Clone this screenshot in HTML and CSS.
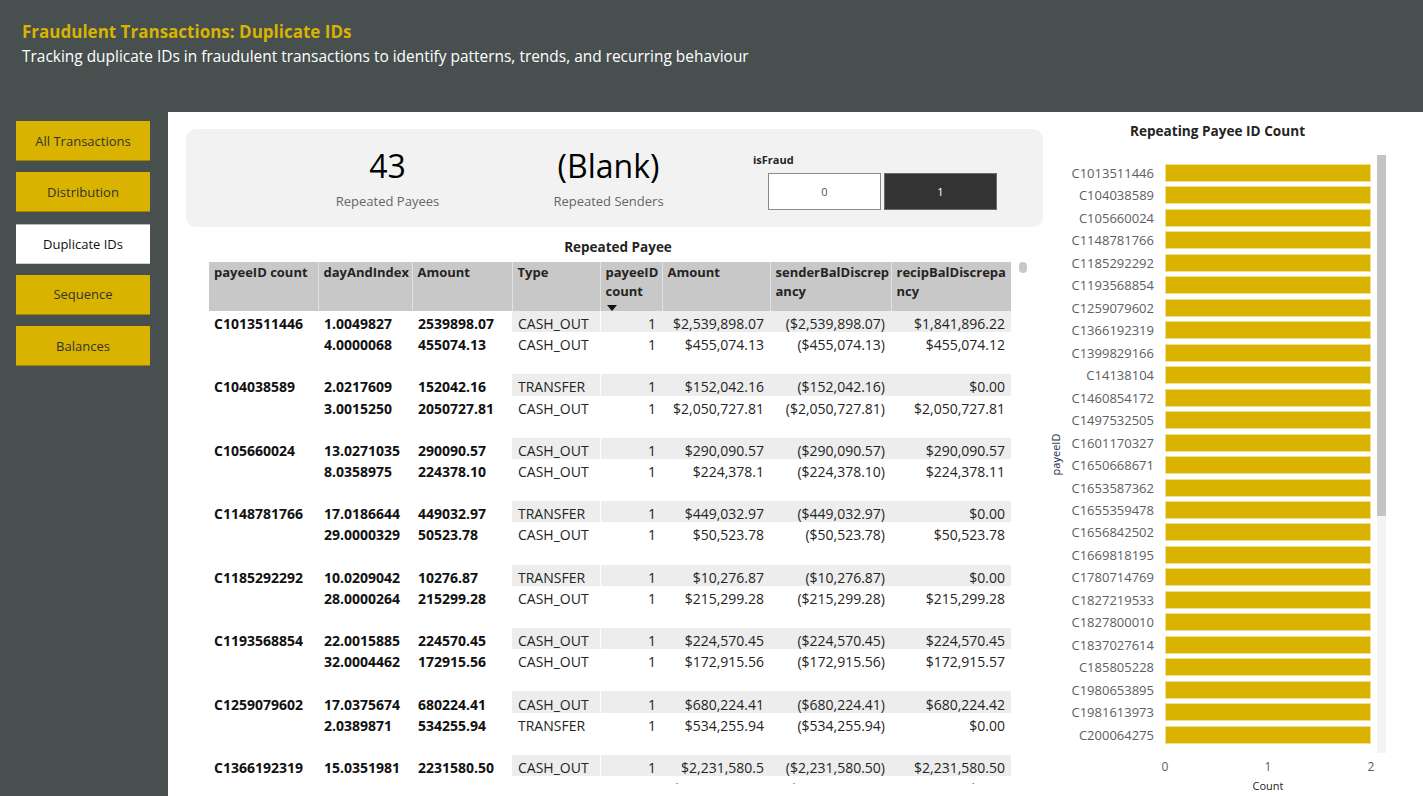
FILE: index.html
```html
<!DOCTYPE html>
<html lang="en">
<head>
<meta charset="utf-8">
<title>Fraudulent Transactions: Duplicate IDs</title>
<link rel="stylesheet" href="styles.css">
</head>
<body>
<header class="top">
  <h1 class="title">Fraudulent Transactions: Duplicate IDs</h1>
  <p class="subtitle">Tracking duplicate IDs in fraudulent transactions to identify patterns, trends, and recurring behaviour</p>
</header>
<div class="layout">
  <nav class="side">
    <div class="nav-btn">All Transactions</div>
    <div class="nav-btn">Distribution</div>
    <div class="nav-btn active">Duplicate IDs</div>
    <div class="nav-btn">Sequence</div>
    <div class="nav-btn">Balances</div>
  </nav>
  <main class="canvas">
    <section class="left">
      <div class="kpi-card">
        <div class="kpi">
          <div class="kpi-value">43</div>
          <div class="kpi-label">Repeated Payees</div>
        </div>
        <div class="kpi">
          <div class="kpi-value">(Blank)</div>
          <div class="kpi-label">Repeated Senders</div>
        </div>
        <div class="slicer">
          <div class="slicer-title">isFraud</div>
          <div class="slicer-btns">
            <div class="sbtn">0</div>
            <div class="sbtn sel">1</div>
          </div>
        </div>
      </div>

      <div class="table-visual">
        <div class="tv-title">Repeated Payee</div>
        <div class="tv-body">
          <div class="tv-clip">
            <table class="matrix">
              <colgroup>
                <col class="c1"><col class="c2"><col class="c3"><col class="c4"><col class="c5"><col class="c6"><col class="c7"><col class="c8">
              </colgroup>
              <thead>
                <tr>
                  <th>payeeID count</th>
                  <th>dayAndIndex</th>
                  <th>Amount</th>
                  <th>Type</th>
                  <th>payeeID<br>count<span class="sort"></span></th>
                  <th>Amount</th>
                  <th>senderBalDiscrep<br>ancy</th>
                  <th>recipBalDiscrepa<br>ncy</th>
                </tr>
              </thead>
              <tbody>
                <tr class="r1"><td class="id">C1013511446</td><td class="b">1.0049827</td><td class="b">2539898.07</td><td class="type">CASH_OUT</td><td class="num">1</td><td class="num">$2,539,898.07</td><td class="num">($2,539,898.07)</td><td class="num">$1,841,896.22</td></tr>
                <tr class="r2"><td class="id"></td><td class="b">4.0000068</td><td class="b">455074.13</td><td class="type">CASH_OUT</td><td class="num">1</td><td class="num">$455,074.13</td><td class="num">($455,074.13)</td><td class="num">$455,074.12</td></tr>
                <tr class="gap"><td colspan="8"></td></tr>

                <tr class="r1"><td class="id">C104038589</td><td class="b">2.0217609</td><td class="b">152042.16</td><td class="type">TRANSFER</td><td class="num">1</td><td class="num">$152,042.16</td><td class="num">($152,042.16)</td><td class="num">$0.00</td></tr>
                <tr class="r2"><td class="id"></td><td class="b">3.0015250</td><td class="b">2050727.81</td><td class="type">CASH_OUT</td><td class="num">1</td><td class="num">$2,050,727.81</td><td class="num">($2,050,727.81)</td><td class="num">$2,050,727.81</td></tr>
                <tr class="gap"><td colspan="8"></td></tr>

                <tr class="r1"><td class="id">C105660024</td><td class="b">13.0271035</td><td class="b">290090.57</td><td class="type">CASH_OUT</td><td class="num">1</td><td class="num">$290,090.57</td><td class="num">($290,090.57)</td><td class="num">$290,090.57</td></tr>
                <tr class="r2"><td class="id"></td><td class="b">8.0358975</td><td class="b">224378.10</td><td class="type">CASH_OUT</td><td class="num">1</td><td class="num">$224,378.1</td><td class="num">($224,378.10)</td><td class="num">$224,378.11</td></tr>
                <tr class="gap"><td colspan="8"></td></tr>

                <tr class="r1"><td class="id">C1148781766</td><td class="b">17.0186644</td><td class="b">449032.97</td><td class="type">TRANSFER</td><td class="num">1</td><td class="num">$449,032.97</td><td class="num">($449,032.97)</td><td class="num">$0.00</td></tr>
                <tr class="r2"><td class="id"></td><td class="b">29.0000329</td><td class="b">50523.78</td><td class="type">CASH_OUT</td><td class="num">1</td><td class="num">$50,523.78</td><td class="num">($50,523.78)</td><td class="num">$50,523.78</td></tr>
                <tr class="gap"><td colspan="8"></td></tr>

                <tr class="r1"><td class="id">C1185292292</td><td class="b">10.0209042</td><td class="b">10276.87</td><td class="type">TRANSFER</td><td class="num">1</td><td class="num">$10,276.87</td><td class="num">($10,276.87)</td><td class="num">$0.00</td></tr>
                <tr class="r2"><td class="id"></td><td class="b">28.0000264</td><td class="b">215299.28</td><td class="type">CASH_OUT</td><td class="num">1</td><td class="num">$215,299.28</td><td class="num">($215,299.28)</td><td class="num">$215,299.28</td></tr>
                <tr class="gap"><td colspan="8"></td></tr>

                <tr class="r1"><td class="id">C1193568854</td><td class="b">22.0015885</td><td class="b">224570.45</td><td class="type">CASH_OUT</td><td class="num">1</td><td class="num">$224,570.45</td><td class="num">($224,570.45)</td><td class="num">$224,570.45</td></tr>
                <tr class="r2"><td class="id"></td><td class="b">32.0004462</td><td class="b">172915.56</td><td class="type">CASH_OUT</td><td class="num">1</td><td class="num">$172,915.56</td><td class="num">($172,915.56)</td><td class="num">$172,915.57</td></tr>
                <tr class="gap"><td colspan="8"></td></tr>

                <tr class="r1"><td class="id">C1259079602</td><td class="b">17.0375674</td><td class="b">680224.41</td><td class="type">CASH_OUT</td><td class="num">1</td><td class="num">$680,224.41</td><td class="num">($680,224.41)</td><td class="num">$680,224.42</td></tr>
                <tr class="r2"><td class="id"></td><td class="b">2.0389871</td><td class="b">534255.94</td><td class="type">TRANSFER</td><td class="num">1</td><td class="num">$534,255.94</td><td class="num">($534,255.94)</td><td class="num">$0.00</td></tr>
                <tr class="gap"><td colspan="8"></td></tr>

                <tr class="r1"><td class="id">C1366192319</td><td class="b">15.0351981</td><td class="b">2231580.50</td><td class="type">CASH_OUT</td><td class="num">1</td><td class="num">$2,231,580.5</td><td class="num">($2,231,580.50)</td><td class="num">$2,231,580.50</td></tr>
                <tr class="r2"><td class="id"></td><td class="b">1.0000187</td><td class="b">1088248.15</td><td class="type">TRANSFER</td><td class="num">1</td><td class="num">$1,088,248.15</td><td class="num">($1,088,248.15)</td><td class="num">$0.00</td></tr>
                <tr class="gap"><td colspan="8"></td></tr>
              </tbody>
            </table>
          </div>
          <div class="tv-scroll"><div class="tv-thumb"></div></div>
        </div>
      </div>
    </section>

    <section class="chart">
      <div class="chart-title">Repeating Payee ID Count</div>
      <div class="plot">
        <div class="y-title"><span>payeeID</span></div>
        <div class="bars">
          <div class="bar-row"><span class="lbl">C1013511446</span><span class="bar"></span></div>
          <div class="bar-row"><span class="lbl">C104038589</span><span class="bar"></span></div>
          <div class="bar-row"><span class="lbl">C105660024</span><span class="bar"></span></div>
          <div class="bar-row"><span class="lbl">C1148781766</span><span class="bar"></span></div>
          <div class="bar-row"><span class="lbl">C1185292292</span><span class="bar"></span></div>
          <div class="bar-row"><span class="lbl">C1193568854</span><span class="bar"></span></div>
          <div class="bar-row"><span class="lbl">C1259079602</span><span class="bar"></span></div>
          <div class="bar-row"><span class="lbl">C1366192319</span><span class="bar"></span></div>
          <div class="bar-row"><span class="lbl">C1399829166</span><span class="bar"></span></div>
          <div class="bar-row"><span class="lbl">C14138104</span><span class="bar"></span></div>
          <div class="bar-row"><span class="lbl">C1460854172</span><span class="bar"></span></div>
          <div class="bar-row"><span class="lbl">C1497532505</span><span class="bar"></span></div>
          <div class="bar-row"><span class="lbl">C1601170327</span><span class="bar"></span></div>
          <div class="bar-row"><span class="lbl">C1650668671</span><span class="bar"></span></div>
          <div class="bar-row"><span class="lbl">C1653587362</span><span class="bar"></span></div>
          <div class="bar-row"><span class="lbl">C1655359478</span><span class="bar"></span></div>
          <div class="bar-row"><span class="lbl">C1656842502</span><span class="bar"></span></div>
          <div class="bar-row"><span class="lbl">C1669818195</span><span class="bar"></span></div>
          <div class="bar-row"><span class="lbl">C1780714769</span><span class="bar"></span></div>
          <div class="bar-row"><span class="lbl">C1827219533</span><span class="bar"></span></div>
          <div class="bar-row"><span class="lbl">C1827800010</span><span class="bar"></span></div>
          <div class="bar-row"><span class="lbl">C1837027614</span><span class="bar"></span></div>
          <div class="bar-row"><span class="lbl">C185805228</span><span class="bar"></span></div>
          <div class="bar-row"><span class="lbl">C1980653895</span><span class="bar"></span></div>
          <div class="bar-row"><span class="lbl">C1981613973</span><span class="bar"></span></div>
          <div class="bar-row"><span class="lbl">C200064275</span><span class="bar"></span></div>
        </div>
        <div class="vscroll"><div class="vthumb"></div></div>
      </div>
      <div class="x-axis">
        <div class="ticks"><span>0</span><span>1</span><span>2</span></div>
        <div class="x-title">Count</div>
      </div>
    </section>
  </main>
</div>
</body>
</html>
```

FILE: styles.css
```css
* { box-sizing: border-box; margin: 0; padding: 0; }

html, body { width: 1423px; height: 796px; overflow: hidden; }

body {
  font-family: "Open Sans", "Noto Sans", sans-serif;
  background: #474f4f;
  color: #252423;
}

/* ---------- header ---------- */
.top { height: 112px; padding: 20px 22px 0; }
.title { font-size: 17px; font-weight: 700; color: #d9b300; line-height: 24px; }
.subtitle { font-size: 15.45px; color: #ffffff; line-height: 22px; margin-top: 1px; }

/* ---------- layout ---------- */
.layout { display: flex; height: 684px; }

.side {
  width: 168px; flex: none;
  padding: 9px 0 0 16px;
  display: flex; flex-direction: column; gap: 11.25px;
}
.nav-btn {
  width: 134px; height: 40px;
  background: #d9b300;
  border-bottom: 1px solid #a08400;
  display: flex; align-items: center; justify-content: center;
  font-size: 13px; color: #333333;
}
.nav-btn.active { background: #ffffff; color: #111111; border-top: 1px solid #b8b8b8; border-bottom: 1px solid #cfcfcf; }

.canvas { flex: 1; background: #ffffff; display: flex; overflow: hidden; }

/* ---------- left column ---------- */
.left { width: 857px; margin-left: 18px; padding-top: 17px; flex: none; }

.kpi-card {
  height: 98px;
  background: #f2f2f2;
  border-radius: 10px;
  display: flex;
  padding-left: 91px;
}
.kpi { width: 221px; text-align: center; padding-top: 17px; }
.kpi-value { font-size: 32px; line-height: 40px; color: #000000; }
.kpi-label { font-size: 13px; line-height: 18px; margin-top: 6px; color: #666666; }

.slicer { margin-left: 34px; padding-top: 24px; }
.slicer-title { font-size: 11px; font-weight: 700; line-height: 14px; color: #252423; }
.slicer-btns { display: flex; gap: 3px; margin: 6px 0 0 15px; }
.sbtn {
  width: 113px; height: 37px;
  border: 1px solid #8a8a8a;
  background: #ffffff;
  display: flex; align-items: center; justify-content: center;
  font-size: 11px; color: #555555;
}
.sbtn.sel { background: #333333; color: #ffffff; border-color: #6b6b6b; }

/* ---------- table visual ---------- */
.table-visual { margin: 10px 0 0 23px; width: 818px; }
.tv-title { text-align: center; font-size: 13.5px; font-weight: 700; line-height: 20px; color: #252423; }
.tv-body { display: flex; margin-top: 5px; }
.tv-clip { width: 802px; height: 522px; overflow: hidden; }
.tv-scroll { width: 16px; padding-left: 8px; }
.tv-thumb { width: 8px; height: 11px; border-radius: 4px; background: #c8c8c8; }

.matrix { width: 802px; table-layout: fixed; border-collapse: collapse; font-size: 14px; }
.c1 { width: 109px; } .c2 { width: 94px; } .c3 { width: 100px; } .c4 { width: 88px; }
.c5 { width: 62px; } .c6 { width: 108px; } .c7 { width: 121px; } .c8 { width: 120px; }

.matrix th {
  height: 49px;
  background: #c8c8c8;
  border-left: 1px solid #e2e2e2;
  text-align: left; vertical-align: top;
  font-size: 13px; font-weight: 700; line-height: 19px;
  padding: 1px 5px 0;
  color: #252423;
  white-space: nowrap;
}
.matrix th:first-child { border-left: none; }
.sort {
  display: block; width: 0; height: 0; margin: 4px 0 0 1px;
  border-left: 5px solid transparent; border-right: 5px solid transparent;
  border-top: 6px solid #111111;
}

.matrix td {
  height: 21.15px; line-height: 17px; padding: 4px 6px 0;
  white-space: nowrap; overflow: hidden;
}
.matrix td.id { font-weight: 700; color: #111111; padding-left: 5px; }
.matrix td.b { font-weight: 700; color: #111111; }
.matrix td.num { text-align: right; }
.matrix tr.r1 td.type, .matrix tr.r1 td.num { background: #ededed; }
.matrix tr.r1 td.type { border-right: 1px solid #ffffff; }
.matrix tr.gap td { height: 21.13px; padding: 0; }

/* ---------- chart ---------- */
.chart { width: 349px; flex: none; padding-top: 10px; }
.chart-title { text-align: center; font-size: 13.6px; font-weight: 700; line-height: 18px; color: #252423; }

.plot { display: flex; margin-top: 15px; height: 598px; }
.y-title { width: 26px; display: flex; align-items: center; justify-content: center; }
.y-title span { transform: rotate(-90deg); font-size: 11px; color: #252a4a; white-space: nowrap; }

.bars { display: flex; flex-direction: column; padding: 6.76px 0; }
.bar-row { display: grid; grid-template-columns: 85px 206px; column-gap: 11px; height: 22.48px; align-items: center; }
.lbl { text-align: right; font-size: 13px; color: #605e5c; white-space: nowrap; line-height: 18px; }
.bar { height: 18px; background: #d9b300; border: 1px solid #f1df8e; }

.vscroll { width: 9px; margin-left: 6px; background: #f3f3f3; }
.vthumb { height: 361px; background: #c4c4c4; }

.x-axis { margin-left: 122px; width: 206px; margin-top: 7px; }
.ticks { display: flex; justify-content: space-between; height: 14px; }
.ticks span { width: 0; display: flex; justify-content: center; font-size: 12px; line-height: 14px; color: #605e5c; }
.x-title { text-align: center; font-size: 11px; line-height: 14px; margin-top: 5px; color: #252423; }
```
